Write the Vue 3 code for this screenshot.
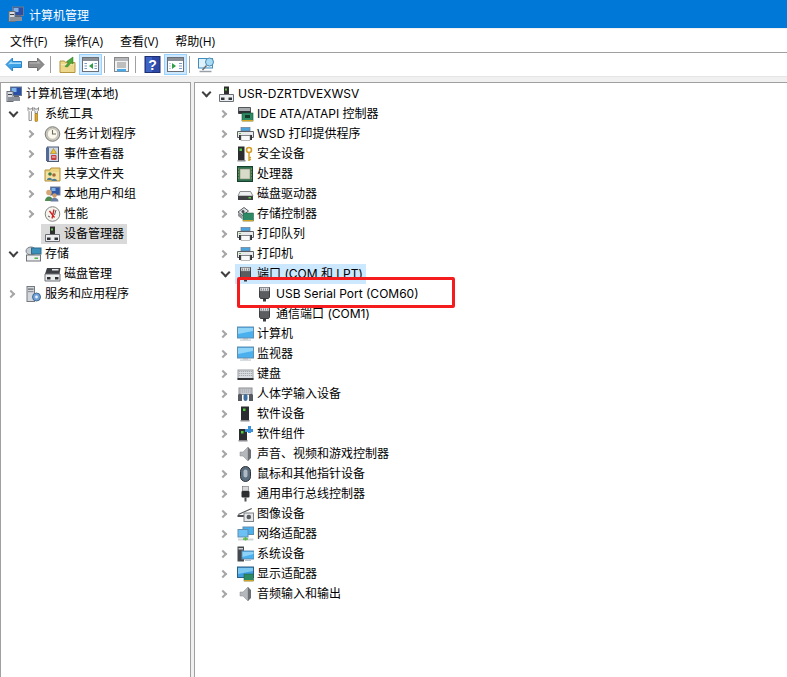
<script setup>
const leftRows = [
  { d: 0, icon: 'computer', text: '计算机管理(本地)', ch: '' },
  { d: 1, icon: 'tools', text: '系统工具', ch: 'open' },
  { d: 2, icon: 'clock', text: '任务计划程序', ch: 'closed' },
  { d: 2, icon: 'log', text: '事件查看器', ch: 'closed' },
  { d: 2, icon: 'share', text: '共享文件夹', ch: 'closed' },
  { d: 2, icon: 'users', text: '本地用户和组', ch: 'closed' },
  { d: 2, icon: 'perf', text: '性能', ch: 'closed' },
  { d: 2, icon: 'devmgr', text: '设备管理器', ch: '', sel: 'gray' },
  { d: 1, icon: 'storage', text: '存储', ch: 'open' },
  { d: 2, icon: 'disk', text: '磁盘管理', ch: '' },
  { d: 1, icon: 'services', text: '服务和应用程序', ch: 'closed' }
]
const rightRows = [
  { d: 0, icon: 'devmgr', text: 'USR-DZRTDVEXWSV', ch: 'open' },
  { d: 1, icon: 'ide', text: 'IDE ATA/ATAPI 控制器', ch: 'closed' },
  { d: 1, icon: 'printer', text: 'WSD 打印提供程序', ch: 'closed' },
  { d: 1, icon: 'security', text: '安全设备', ch: 'closed' },
  { d: 1, icon: 'cpu', text: '处理器', ch: 'closed' },
  { d: 1, icon: 'drive', text: '磁盘驱动器', ch: 'closed' },
  { d: 1, icon: 'storctl', text: '存储控制器', ch: 'closed' },
  { d: 1, icon: 'printer', text: '打印队列', ch: 'closed' },
  { d: 1, icon: 'printer', text: '打印机', ch: 'closed' },
  { d: 1, icon: 'port', text: '端口 (COM 和 LPT)', ch: 'open', sel: 'blue' },
  { d: 2, icon: 'port', text: 'USB Serial Port (COM60)', ch: '' },
  { d: 2, icon: 'port', text: '通信端口 (COM1)', ch: '' },
  { d: 1, icon: 'monitor', text: '计算机', ch: 'closed' },
  { d: 1, icon: 'monitor', text: '监视器', ch: 'closed' },
  { d: 1, icon: 'keyboard', text: '键盘', ch: 'closed' },
  { d: 1, icon: 'hid', text: '人体学输入设备', ch: 'closed' },
  { d: 1, icon: 'softdev', text: '软件设备', ch: 'closed' },
  { d: 1, icon: 'softcomp', text: '软件组件', ch: 'closed' },
  { d: 1, icon: 'speaker', text: '声音、视频和游戏控制器', ch: 'closed' },
  { d: 1, icon: 'mouse', text: '鼠标和其他指针设备', ch: 'closed' },
  { d: 1, icon: 'usb', text: '通用串行总线控制器', ch: 'closed' },
  { d: 1, icon: 'camera', text: '图像设备', ch: 'closed' },
  { d: 1, icon: 'network', text: '网络适配器', ch: 'closed' },
  { d: 1, icon: 'system', text: '系统设备', ch: 'closed' },
  { d: 1, icon: 'display', text: '显示适配器', ch: 'closed' },
  { d: 1, icon: 'speaker', text: '音频输入和输出', ch: 'closed' }
]
const menus = ['文件(F)', '操作(A)', '查看(V)', '帮助(H)']

const icons = {
  computer: '<rect x="4.500" y="1" width="11" height="8.500" fill="#2a4fa8" stroke="#6b7a90"/><rect x="5.500" y="2" width="5" height="4" fill="#7fb4ea"/><rect x="1" y="5.500" width="6" height="10" fill="#d8dce2" stroke="#6a6f78"/><rect x="2" y="11" width="12" height="4" fill="#8b9099"/><rect x="2" y="8" width="4" height="1" fill="#3d3f44"/><rect x="8" y="9.500" width="5" height="1.500" fill="#606570"/>',
  tools: '<path d="M3 1.500v3l1 1v9h2.500v-9l1-1v-3l-1 1.500h-2.500z" fill="#f4f4f4" stroke="#777" stroke-width=".8"/><path d="M9 1.500v3l1 1v2h2.500v-2l1-1v-3l-1 1.500H10z" fill="#e9e9e9" stroke="#777" stroke-width=".8"/><rect x="10" y="7.500" width="2.500" height="8" rx=".8" fill="#e6a615" stroke="#8a6a10" stroke-width=".6"/>',
  clock: '<circle cx="8.500" cy="8" r="7.300" fill="#c9c6bd" stroke="#7c7c78"/><circle cx="8.500" cy="8" r="5.200" fill="#fbf8ee" stroke="#b9b5a6" stroke-width=".7"/><path d="M8.500 4v4h3.500" fill="none" stroke="#6d6a60" stroke-width="1.100"/>',
  log: '<rect x="3.500" y="1" width="11" height="14.500" fill="#cfd8e6" stroke="#4c5a74"/><rect x="2" y="1.500" width="3" height="13.500" fill="#526a94"/><path d="M9.500 2.500l3 5h-6z" fill="#f0c52e" stroke="#8a6a10" stroke-width=".5"/><rect x="7" y="9" width="5.500" height="5" rx="1" fill="#c94040"/><rect x="8" y="10.500" width="3.500" height="1" fill="#f3dcdc"/>',
  share: '<path d="M1 4h5l1-2h9v13H1z" fill="#ecd483" stroke="#b3913a"/><path d="M2 6h13v8H2z" fill="#f3e1a4"/><circle cx="6" cy="8" r="1.800" fill="#3f7b40"/><circle cx="10" cy="9" r="1.800" fill="#a8693a"/><path d="M3 14c0-3 5-3 5 0zM7.500 15c0-3 5.500-3 5.500 0z" fill="#4d7b92"/>',
  users: '<rect x="6.500" y="1" width="9.500" height="8" fill="#315ba8" stroke="#758196"/><rect x="7.500" y="2" width="4" height="3" fill="#7fb4ea"/><circle cx="5" cy="6.500" r="2.800" fill="#d6a878"/><path d="M1 15c0-6 8-6 8 0z" fill="#4f8a4f"/><circle cx="10.500" cy="9.500" r="2.200" fill="#d09a6a"/><path d="M6.500 15.500c0-5 8-5 8 0z" fill="#6b7ea1"/>',
  perf: '<circle cx="8.500" cy="8" r="7.300" fill="#f4f3ee" stroke="#85857f"/><path d="M10 3.500L8 12.500M5.500 5l5 6.500" stroke="#d02020" stroke-width="1.300" fill="none"/><path d="M12 4l-1.500 5M4 10l2 1" stroke="#333" stroke-width=".8" fill="none"/>',
  devmgr: '<rect x="6" y="0.500" width="5" height="8" fill="#2e2e2e"/><rect x="7" y="2.500" width="2" height="2" fill="#5ec04d"/><path d="M1.500 8.500h14v7h-14z" fill="#ecedee" stroke="#6b6f75"/><rect x="3" y="11.500" width="3.500" height="2.500" fill="#30343a"/><rect x="10.500" y="11.500" width="3.500" height="2.500" fill="#30343a"/>',
  storage: '<ellipse cx="6" cy="5" rx="5" ry="4" fill="#c7ccd1" stroke="#7a8087"/><rect x="6.500" y="2" width="9.500" height="6" fill="#3b8fbb" stroke="#2d6a8c"/><rect x="1.500" y="9" width="14" height="6" fill="#eceeef" stroke="#6f7378"/><rect x="9.500" y="11.500" width="3.500" height="1.500" fill="#54b04a"/>',
  disk: '<path d="M3 2h13.500l-1 6H1z" fill="#3c3f44"/><rect x="8" y="3" width="6.500" height="1.500" fill="#e9e9e9"/><path d="M1 8h15v7H1z" fill="#eceded" stroke="#6c7076"/><rect x="3" y="11" width="3.500" height="2.500" fill="#2b2e33"/><rect x="11" y="11" width="3.500" height="2.500" fill="#2b2e33"/>',
  services: '<rect x="2" y="0.500" width="7.500" height="15" fill="#d4d8dd" stroke="#757a81"/><rect x="3" y="2.500" width="5.500" height="1.200" fill="#60656c"/><rect x="3" y="5" width="5.500" height="1.200" fill="#8f949b"/><circle cx="11.500" cy="11" r="4" fill="#6ea2d8" stroke="#44698f"/><circle cx="11.500" cy="11" r="1.400" fill="#e8f0f8"/>',
  ide: '<path d="M1.500 1.500h12v6h-12z" fill="#a7abae" stroke="#52565a"/><rect x="1.500" y="5" width="12" height="2.500" fill="#2d2f32"/><rect x="5" y="7" width="11" height="8" fill="#2d8a63" stroke="#19543a" stroke-width=".6"/><rect x="8" y="9" width="5" height="3" fill="#143a2a"/><rect x="5" y="14" width="11" height="1.300" fill="#d8a624"/>',
  printer: '<rect x="4" y="1.500" width="9" height="3.500" fill="#4da3de" stroke="#6a7e8e" stroke-width=".7"/><path d="M0.500 5.500h16v6h-16z" fill="#e8e9ea" stroke="#5c6066"/><rect x="2" y="9" width="13" height="5" fill="#2f3236"/><rect x="4" y="9.500" width="9" height="5" fill="#fafafa" stroke="#777" stroke-width=".5"/><rect x="2" y="7" width="2" height="1" fill="#6cc04e"/>',
  security: '<rect x="1" y="0.500" width="6.500" height="14.500" fill="#2c2d30"/><rect x="2.500" y="2.500" width="2.500" height="2.500" fill="#4fcb3b"/><rect x="0.500" y="14" width="8" height="1.500" fill="#8a8c8f"/><circle cx="12" cy="4" r="2.500" fill="none" stroke="#d49f28" stroke-width="1.600"/><path d="M12 6.500V15M12 11.500h2M12 13.500h2" stroke="#d49f28" stroke-width="1.400" fill="none"/>',
  cpu: '<rect x="0.500" y="0.500" width="15" height="15" fill="#2e6f4f" stroke="#16402c"/><rect x="3" y="3" width="10" height="10" fill="#d7dbc8" stroke="#8a8e78" stroke-width=".6"/><path d="M1 3h1M1 6h1M1 9h1M1 12h1M14 3h1M14 6h1M14 9h1M14 12h1" stroke="#d8b550" stroke-width=".8"/>',
  drive: '<path d="M3 5.500h10.500l2.500 4.500H1z" fill="#eeeff0" stroke="#8a8d90"/><path d="M1 10h15v4H1z" fill="#3d3f43"/><rect x="11.500" y="11" width="2.500" height="1.500" fill="#56d13e"/>',
  storctl: '<path d="M1 6l6-4.500 4.500 3.500-6 4.500z" fill="#e0e2e4" stroke="#595c60"/><circle cx="6" cy="5.500" r="1.500" fill="#4a4d52"/><path d="M1 7v3l4.500 3.500V10z" fill="#8e9195"/><rect x="6" y="7" width="10.500" height="8" fill="#2e8a64" stroke="#1d5a41" stroke-width=".5"/><rect x="6" y="14" width="10.500" height="1.300" fill="#d3a32a"/>',
  port: '<path d="M3.500 1.500h10v9.500l-1 1.500h-8l-1-1.500z" fill="#5b5d61" stroke="#3d3f42"/><rect x="4" y="1.500" width="9" height="3.500" fill="#dcdde0" stroke="#85878b" stroke-width=".5"/><path d="M5.500 2.500v2M7.500 2.500v2M9.500 2.500v2M11.500 2.500v2" stroke="#77797d" stroke-width=".8"/><rect x="7" y="12.500" width="3" height="3" fill="#3a3b3e"/>',
  monitor: '<rect x="0.500" y="1" width="16" height="11" fill="#4ab0ee" stroke="#5f8eb0"/><path d="M1 2h15v3L1 8z" fill="#90d4f7"/><rect x="6" y="12" width="5" height="1.500" fill="#a8b4bc"/><rect x="3" y="13.500" width="11" height="1.200" fill="#c6ced3"/>',
  keyboard: '<rect x="1" y="4" width="15" height="9" fill="#d9dce0" stroke="#989ca1"/><path d="M2 5.500h13M2 7.500h13M2 9.500h13" stroke="#a7abaf" stroke-dasharray="1.300 .7"/><rect x="0.500" y="12" width="16" height="2" fill="#2f3135"/>',
  hid: '<rect x="2" y="2" width="13" height="6.500" fill="#c9ccd0" stroke="#8a8d91"/><path d="M3 4h11M3 6h11" stroke="#9da0a4" stroke-dasharray="1.300 .7"/><path d="M1 15V9c2-2 3-1 4 0v6zM12 15V9c2-2 3-1 4 0v6z" fill="#555960"/><rect x="6.500" y="8" width="4" height="7" rx="2" fill="#3d6fa1"/>',
  softdev: '<rect x="4" y="0.500" width="8" height="14.500" fill="#2c2d30"/><rect x="6" y="2.500" width="2.500" height="2.500" fill="#4fcb3b"/><rect x="3.500" y="14" width="9" height="1.500" fill="#8a8c8f"/>',
  softcomp: '<rect x="2" y="3" width="8" height="12" fill="#2c2d30"/><rect x="4" y="5" width="2.500" height="2.500" fill="#4fcb3b"/><rect x="1.500" y="14" width="9" height="1.500" fill="#8a8c8f"/><path d="M11 0v3H8v3h3v1h3V6h2V3h-2V0z" fill="#3d92d8"/>',
  speaker: '<path d="M3 6h3l5-5v14l-5-5H3z" fill="#b4b7bb" stroke="#85898d" stroke-width=".5"/><path d="M11 1l3 3v8l-3 3z" fill="#6c7075"/>',
  mouse: '<rect x="3.500" y="0.500" width="10" height="15" rx="5" fill="#5a6d7e" stroke="#2e3136"/><rect x="6.500" y="3.500" width="4" height="8" rx="2" fill="#aeb9c3"/>',
  usb: '<rect x="5.500" y="0.500" width="6" height="4.500" fill="#d9d9da" stroke="#6a6c70" stroke-width=".6"/><rect x="4.500" y="5" width="8" height="6.500" rx="1" fill="#2d2e31"/><rect x="7.500" y="11.500" width="2" height="4" fill="#4f5155"/>',
  camera: '<path d="M1 8l13.500-6 .5 1-13.500 6z" fill="#55585c"/><rect x="0.500" y="9" width="7.500" height="2" fill="#4c4e52"/><rect x="7" y="7" width="9.500" height="8.500" fill="#e6e7e8" stroke="#7e8185"/><circle cx="11.800" cy="11" r="2.300" fill="#595c60"/>',
  network: '<rect x="6" y="1" width="10.500" height="7.500" fill="#4ab0ee" stroke="#5f8eb0"/><rect x="1" y="3.500" width="10" height="7.500" fill="#6cc0f3" stroke="#5f8eb0"/><rect x="1" y="12.500" width="15.500" height="2" fill="#cfd3d6"/><path d="M8.500 11v3.500M6 13h5" stroke="#58b947" stroke-width="1.600"/>',
  system: '<rect x="0.500" y="0.500" width="6.500" height="15" fill="#45484d"/><rect x="1.500" y="2" width="4.500" height="1.500" fill="#cfd2d5"/><rect x="5" y="5" width="12" height="8" fill="#4ab0ee" stroke="#5f8eb0"/><path d="M5.500 6h11v2l-11 3z" fill="#8ed3f7"/><rect x="8" y="13.500" width="6" height="1.500" fill="#b8c2c9"/>',
  display: '<rect x="0.500" y="1" width="16" height="10.500" fill="#3f9fe2" stroke="#2f5f80"/><path d="M1 2h15v3L1 8z" fill="#7fc8f2"/><rect x="7" y="8" width="9.500" height="7" fill="#2e8a64" stroke="#1d5a41" stroke-width=".5"/><rect x="7" y="14" width="9.500" height="1.300" fill="#d3a32a"/>'
}
</script>

<template>
  <div class="window">
    <header class="title">
      <svg class="ticon" viewBox="0 0 17 16" v-html="icons.computer"></svg>
      <span>计算机管理</span>
    </header>
    <nav class="menu">
      <span v-for="m in menus" :key="m" class="menu-item">{{ m }}</span>
    </nav>
    <div class="toolbar">
      <span class="tb">
        <svg viewBox="0 0 17 16"><path d="M1 8l6.500-6.500v3.500h9v6h-9v3.500z" fill="#3ea2e6" stroke="#2a86cc"/><path d="M3 8l3.500-3.500V6h9.500v1.500H6z" fill="#a8dcf8"/></svg>
      </span>
      <span class="tb">
        <svg viewBox="0 0 17 16"><path d="M16 8L9.500 1.500V5h-9v6h9v3.500z" fill="#8e8e8e" stroke="#707070"/><path d="M1.500 6h8V4l3 3H1.500z" fill="#b8b8b8"/></svg>
      </span>
      <i class="sep"></i>
      <span class="tb">
        <svg viewBox="0 0 17 17"><path d="M1 5h4.500l1 1.500h9.500v10H1z" fill="#edd78a" stroke="#b5953f"/><path d="M2 8h13v1H2z" fill="#f6e8b5"/><path d="M6 10.500l3.500-4-2-1 6.500-4.500v7l-2-1-3.500 4z" fill="#4ea838" stroke="#2f7524" stroke-width=".5"/></svg>
      </span>
      <span class="tb on">
        <svg viewBox="0 0 17 17"><rect x="0.500" y="1.500" width="16" height="14" fill="#fff" stroke="#6b6f75"/><rect x="1" y="2" width="15" height="3" fill="#8a8e95"/><path d="M11 7v6l-4-3z" fill="#2f9e44"/><path d="M2.500 7.500h2.500M2.500 10h2.500M2.500 12.500h2.500M12.500 7.500h2.500M12.500 10h2.500M12.500 12.500h2.500" stroke="#7a9bc5"/></svg>
      </span>
      <i class="sep"></i>
      <span class="tb">
        <svg viewBox="0 0 17 17"><rect x="1.500" y="1.500" width="14" height="14" fill="#f2f2f2" stroke="#888"/><rect x="2" y="2" width="13" height="3" fill="#b4b6b9"/><path d="M4 7h9M4 9h9M4 11h9" stroke="#8a8a8a"/><rect x="4" y="13" width="9" height="2.500" fill="#4aa8e8"/></svg>
      </span>
      <i class="sep"></i>
      <span class="tb">
        <svg viewBox="0 0 17 17"><rect x="1" y="0.500" width="15" height="16" fill="#2d48a6" stroke="#1c2d70"/><rect x="2" y="1" width="6" height="15" fill="#3f63c4"/><text x="8.500" y="14" text-anchor="middle" font-size="14" font-weight="700" fill="#fff" font-family="Liberation Sans">?</text></svg>
      </span>
      <span class="tb on">
        <svg viewBox="0 0 17 17"><rect x="0.500" y="1.500" width="16" height="14" fill="#fff" stroke="#6b6f75"/><rect x="1" y="2" width="15" height="3" fill="#8a8e95"/><path d="M5 7v6l4-3z" fill="#2f9e44"/><path d="M2.500 7.500h1M2.500 10h1M2.500 12.500h1M12 7.500h3M12 10h3M12 12.500h3" stroke="#7a9bc5"/></svg>
      </span>
      <i class="sep"></i>
      <span class="tb">
        <svg viewBox="0 0 17 17"><rect x="0.500" y="2.500" width="14" height="9.500" fill="#dff1fb" stroke="#3f8dbd"/><circle cx="11.500" cy="6" r="4" fill="#a8dcf5" stroke="#4d8cb3"/><path d="M8.500 9.500L4.500 14" stroke="#6b7074" stroke-width="1.500"/><path d="M1.500 15.500h12" stroke="#9aa0a5" stroke-width="1.500"/></svg>
      </span>
    </div>
    <main class="panes">
      <section class="pane left">
        <div v-for="r in leftRows" :key="r.text" class="row" :class="'d' + r.d">
          <span class="chev" :class="r.ch"></span>
          <span class="cell" :class="r.sel">
            <svg class="ico" viewBox="0 0 17 16" v-html="icons[r.icon]"></svg>
            <span class="txt">{{ r.text }}</span>
          </span>
        </div>
      </section>
      <section class="pane right">
        <div v-for="r in rightRows" :key="r.text" class="row" :class="'d' + r.d">
          <span class="chev" :class="r.ch"></span>
          <span class="cell" :class="r.sel">
            <svg class="ico" viewBox="0 0 17 16" v-html="icons[r.icon]"></svg>
            <span class="txt">{{ r.text }}</span>
          </span>
        </div>
        <div class="callout"></div>
      </section>
    </main>
  </div>
</template>

<style>
html, body { margin: 0; background: #fff; overflow: hidden; }
</style>

<style scoped>
.window {
  width: 787px; height: 677px; display: flex; flex-direction: column; overflow: hidden;
  font-family: Inter, "Noto Sans CJK SC", sans-serif; font-size: 12px; color: #000; background: #f0f0f0;
}
.title {
  height: 28px; background: #0078d7; color: #fff; display: flex; align-items: center; gap: 4px;
  padding-left: 8px; font-size: 12px; font-family: "Noto Sans CJK SC", sans-serif;
}
.ticon { width: 17px; height: 16px; }
.menu {
  height: 24px; background: #fff; display: flex; align-items: center; padding-left: 3px;
  border-bottom: 1px solid #a0a0a0; box-sizing: border-box; margin-top: 1px;
  font-family: "Open Sans", "Noto Sans CJK SC", sans-serif;
}
.menu-item { padding: 0 7px; margin-right: 3px; }
.toolbar {
  height: 23px; background: #fff; border-bottom: 1px solid #e6e6e6; display: flex; align-items: center;
  padding-left: 2px;
}
.tb { width: 23px; height: 21px; display: flex; align-items: center; justify-content: center; box-sizing: border-box; }
.tb svg { width: 17px; height: 17px; }
.tb.on { background: #cce8ff; border: 1px solid #99d1ff; }
.sep { width: 1px; height: 17px; background: #a0a0a0; margin: 0 5px 0 2px; }
.panes { flex: 1; display: flex; gap: 3px; padding-top: 5px; min-height: 0; background: #f0f0f0; }
.pane { background: #fff; border: 1px solid #a0a0a0; border-bottom: 0; box-sizing: border-box; padding-top: 1px; }
.left { width: 191px; }
.right { flex: 1; border-right: 0; position: relative; }
.row { height: 20px; display: flex; align-items: center; white-space: nowrap; }
.left .d0 { padding-left: 4px; }
.left .d0 .chev { display: none; }
.left .d1 { padding-left: 6px; }
.left .d2 { padding-left: 25px; }
.right .d0 { padding-left: 5px; }
.right .d1 { padding-left: 24px; }
.right .d2 { padding-left: 43px; }
.chev { width: 17px; height: 20px; position: relative; flex: none; }
.chev.closed::before, .chev.open::before {
  content: ""; position: absolute; width: 6px; height: 6px; border: solid #a6a6a6; border-width: 2px 2px 0 0;
  box-sizing: border-box; left: 1px; top: 7px; transform: rotate(45deg);
}
.chev.open::before { border-color: #404040; transform: rotate(135deg); top: 5px; left: 3px; width: 7px; height: 7px; }
.cell { display: flex; align-items: center; height: 20px; gap: 3px; padding: 0 1px; }
.ico { width: 17px; height: 16px; flex: none; }
.txt { line-height: 20px; }
.gray { background: #d9d9d9; margin-left: -2px; padding: 0 3px; }
.blue { background: #cce8ff; margin-left: -1px; padding: 0 3px 0 2px; }
.callout {
  position: absolute; left: 42px; top: 194px; width: 218px; height: 31px; box-sizing: border-box;
  border: 3px solid #f41c1c; border-radius: 2px;
}
</style>
